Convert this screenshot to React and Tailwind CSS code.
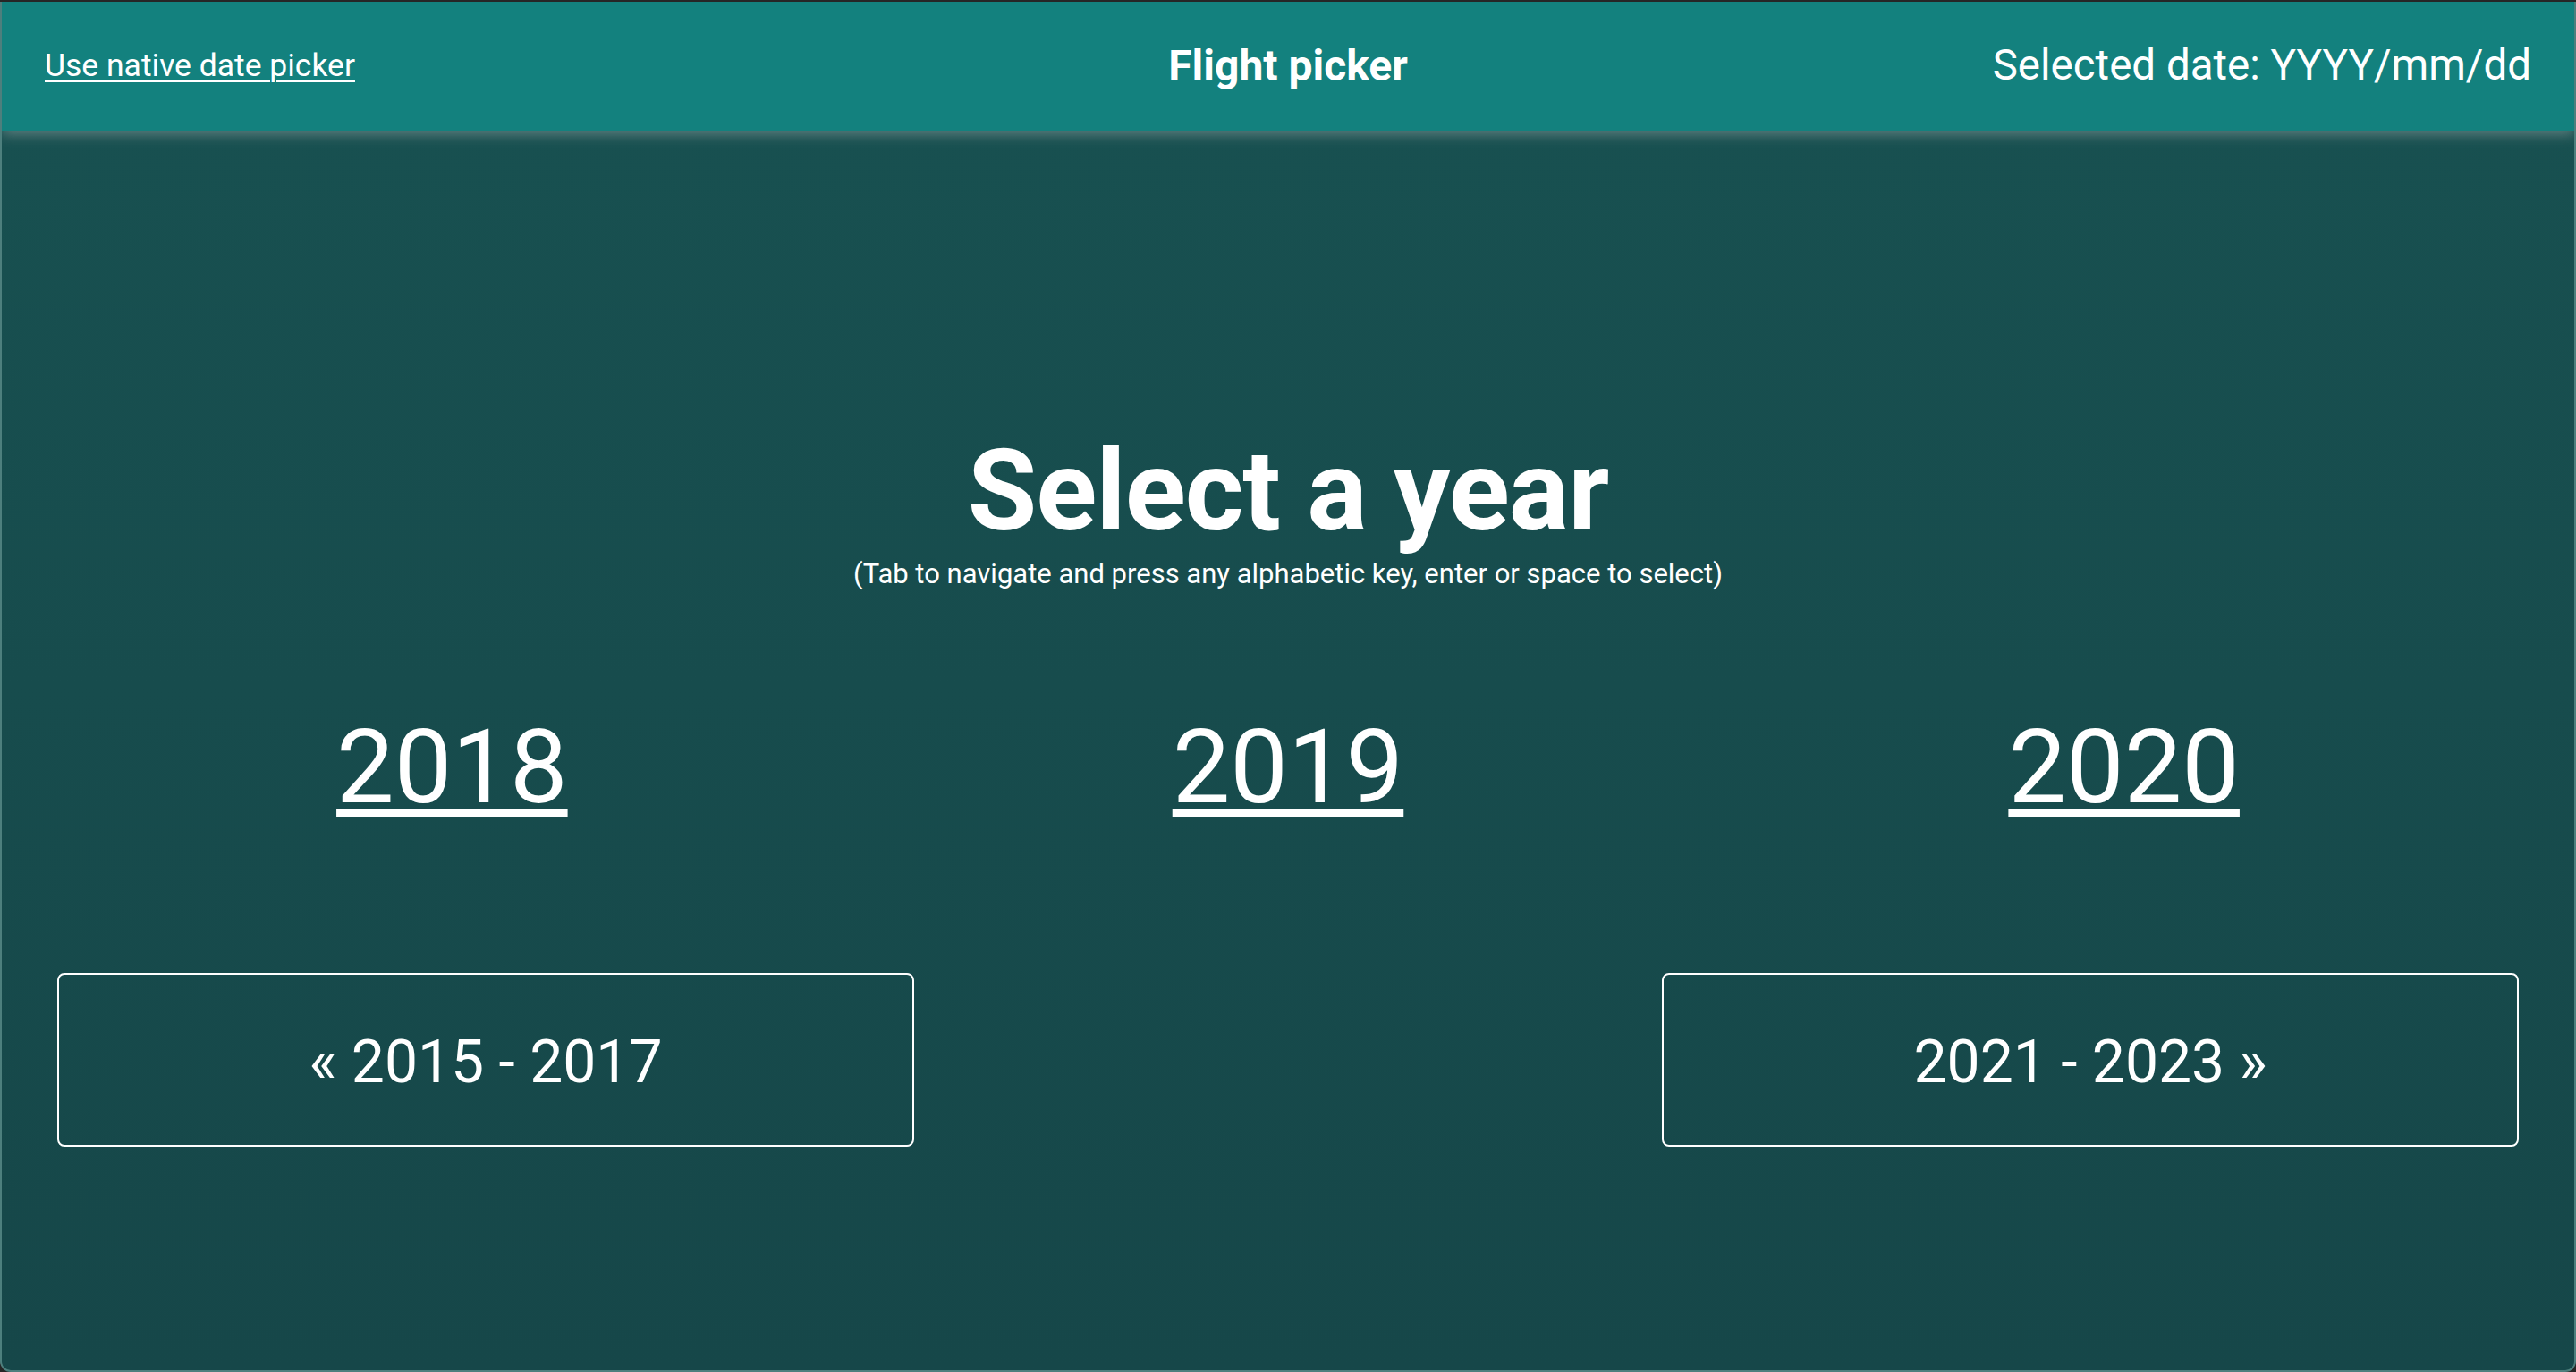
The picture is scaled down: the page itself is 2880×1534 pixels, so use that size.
import React from 'react';

const years = [2018, 2019, 2020];

const App = () => {
  return (
    <div className="h-screen w-full bg-[#262626] pt-[2px]" style={{ fontFamily: 'Roboto, "Open Sans", sans-serif' }}>
      <div className="h-full flex flex-col rounded-b-[12px] border-x-2 border-b-2 border-[#4d7f7d] overflow-hidden bg-gradient-to-b from-[#185151] to-[#164749] text-white">
        {/* Header */}
        <header className="relative z-10 h-[144px] shrink-0 flex items-center px-12 bg-[#13817e] shadow-[0_4px_14px_rgba(190,190,190,0.45)]">
          <div className="flex-1">
            <a href="#" className="text-[35.5px] leading-none underline underline-offset-[5px] decoration-[2px]">
              Use native date picker
            </a>
          </div>
          <h2 className="text-[48px] leading-none font-bold">Flight picker</h2>
          <div className="flex-1 text-[47.5px] leading-none text-right whitespace-nowrap">Selected date: YYYY/mm/dd</div>
        </header>

        {/* Content */}
        <main className="flex-1 flex flex-col items-center pt-[340px]">
          <h1 className="text-[126px] leading-none font-bold tracking-[-1px]">Select a year</h1>
          <p className="mt-[14px] text-[31px] leading-none">
            (Tab to navigate and press any alphabetic key, enter or space to select)
          </p>

          <div className="w-full grid grid-cols-3 px-9 mt-[143px]">
            {years.map(y => (
              <div key={y} className="flex justify-center">
                <a href="#" className="text-[115px] leading-none underline underline-offset-[7px] decoration-[9px]">
                  {y}
                </a>
              </div>
            ))}
          </div>

          <div className="w-full flex justify-between px-[62px] mt-[173px]">
            <button className="w-[958px] h-[194px] rounded-lg border-2 border-white text-[66px] leading-none pt-[6px]">
              « 2015 - 2017
            </button>
            <button className="w-[958px] h-[194px] rounded-lg border-2 border-white text-[66px] leading-none pt-[6px]">
              2021 - 2023 »
            </button>
          </div>
        </main>
      </div>
    </div>
  );
};

export default App;
